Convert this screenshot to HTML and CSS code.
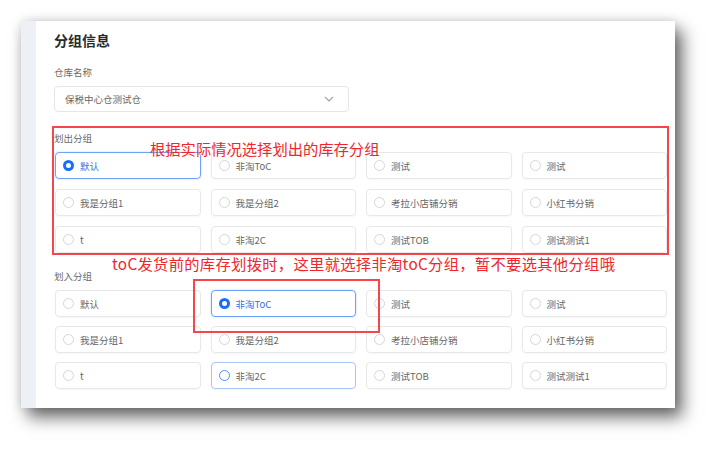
FILE: index.html
```html
<!DOCTYPE html>
<html lang="zh-CN">
<head>
<meta charset="utf-8">
<title>分组信息</title>
<link rel="stylesheet" href="styles.css">
</head>
<body>
<div class="card">
  <div class="strip"></div>
  <div class="content">
    <h2 class="title">分组信息</h2>
    <div class="label">仓库名称</div>
    <div class="select">
      <span>保税中心仓测试仓</span>
      <svg class="chev" width="10" height="6" viewBox="0 0 10 6"><path d="M1 1l4 4 4-4" fill="none" stroke="#a0a0a0" stroke-width="1.1"/></svg>
    </div>

    <div class="section out">
      <div class="label">划出分组</div>
      <div class="note note1">根据实际情况选择划出的库存分组</div>
      <div class="grid">
        <div class="opt sel"><i class="radio"></i>默认</div>
        <div class="opt"><i class="radio"></i>非淘ToC</div>
        <div class="opt"><i class="radio"></i>测试</div>
        <div class="opt"><i class="radio"></i>测试</div>
        <div class="opt"><i class="radio"></i>我是分组1</div>
        <div class="opt"><i class="radio"></i>我是分组2</div>
        <div class="opt"><i class="radio"></i>考拉小店铺分销</div>
        <div class="opt"><i class="radio"></i>小红书分销</div>
        <div class="opt"><i class="radio"></i>t</div>
        <div class="opt"><i class="radio"></i>非淘2C</div>
        <div class="opt"><i class="radio"></i>测试TOB</div>
        <div class="opt"><i class="radio"></i>测试测试1</div>
      </div>
    </div>

    <div class="section in">
      <div class="note note2">toC发货前的库存划拨时，这里就选择非淘toC分组，暂不要选其他分组哦</div>
      <div class="mark"></div>
      <div class="label">划入分组</div>
      <div class="grid">
        <div class="opt"><i class="radio"></i>默认</div>
        <div class="opt sel"><i class="radio"></i>非淘ToC</div>
        <div class="opt"><i class="radio"></i>测试</div>
        <div class="opt"><i class="radio"></i>测试</div>
        <div class="opt"><i class="radio"></i>我是分组1</div>
        <div class="opt"><i class="radio"></i>我是分组2</div>
        <div class="opt"><i class="radio"></i>考拉小店铺分销</div>
        <div class="opt"><i class="radio"></i>小红书分销</div>
        <div class="opt"><i class="radio"></i>t</div>
        <div class="opt hover"><i class="radio"></i>非淘2C</div>
        <div class="opt"><i class="radio"></i>测试TOB</div>
        <div class="opt"><i class="radio"></i>测试测试1</div>
      </div>
    </div>
  </div>
</div>
</body>
</html>
```

FILE: styles.css
```css
* { box-sizing: border-box; }
html, body { margin: 0; padding: 0; background: #fff; }
body {
  font-family: "Noto Sans CJK SC", "Noto Sans", sans-serif;
  width: 717px;
  height: 461px;
  overflow: hidden;
}
.card {
  margin: 21px 0 0 21px;
  width: 654px;
  height: 387px;
  background: #fff;
  display: flex;
  box-shadow: 7px 9px 16px rgba(0,0,0,0.6), 0 0 10px rgba(0,0,0,0.12);
}
.strip { width: 15px; background: #edf0f5; flex: none; }
.content { flex: 1; padding: 8px 8px 0 18px; }
.title {
  margin: 0;
  font-size: 14px;
  line-height: 22px;
  font-weight: 700;
  color: #2a2a2a;
}
.label {
  font-size: 9.5px;
  line-height: 16px;
  color: #6a6a6a;
}
.content > .label { margin-top: 13px; }
.select {
  margin-top: 6px;
  width: 295px;
  height: 26px;
  border: 1px solid #e6e6e6;
  border-radius: 4px;
  display: flex;
  align-items: center;
  justify-content: space-between;
  padding: 0 14px 0 10px;
  font-size: 9.5px;
  color: #666;
}
.chev { display: block; }
.section { position: relative; }
.section.out {
  margin: 14px 0 0 -2px;
  width: 617px;
  border: 2px solid #f5474b;
  padding: 2px 0 0 0;
  height: 129px;
}
.section.out .grid { margin-left: 1px; }
.section.in { margin-top: 13px; }
.section.in .grid { margin-left: 1px; row-gap: 9px; }
.grid {
  margin-top: 6px;
  width: 612px;
  display: grid;
  grid-template-columns: repeat(4, 1fr);
  column-gap: 10px;
  row-gap: 10px;
}
.opt {
  height: 27px;
  border: 1px solid #e8e8ea;
  border-radius: 4px;
  display: flex;
  align-items: center;
  padding-left: 7px;
  font-size: 9.5px;
  color: #666;
  box-shadow: 0 1px 2px rgba(0,0,0,0.04);
}
.radio {
  width: 11px;
  height: 11px;
  border: 1px solid #d6d6d6;
  border-radius: 50%;
  margin-right: 6px;
  flex: none;
  background: #fff;
}
.opt.sel {
  border-color: #6ea2f7;
  color: #2f6fe8;
  box-shadow: 0 0 2px rgba(22,119,255,0.35);
}
.opt.sel .radio { border: 3.5px solid #1a6ef5; }
.opt.hover { border-color: #a9c6f7; }
.opt.hover .radio { border: 1.5px solid #5b8fe8; }
.note {
  position: absolute;
  color: #f0262b;
  font-size: 15.3px;
  line-height: 18px;
  white-space: nowrap;
}
.note1 { left: 96px; top: 11px; }
.note2 { left: 58px; top: -14px; letter-spacing: 0.3px; }
.mark {
  position: absolute;
  left: 139px;
  top: 11px;
  width: 187px;
  height: 54px;
  border: 2px solid #f5474b;
}
```
